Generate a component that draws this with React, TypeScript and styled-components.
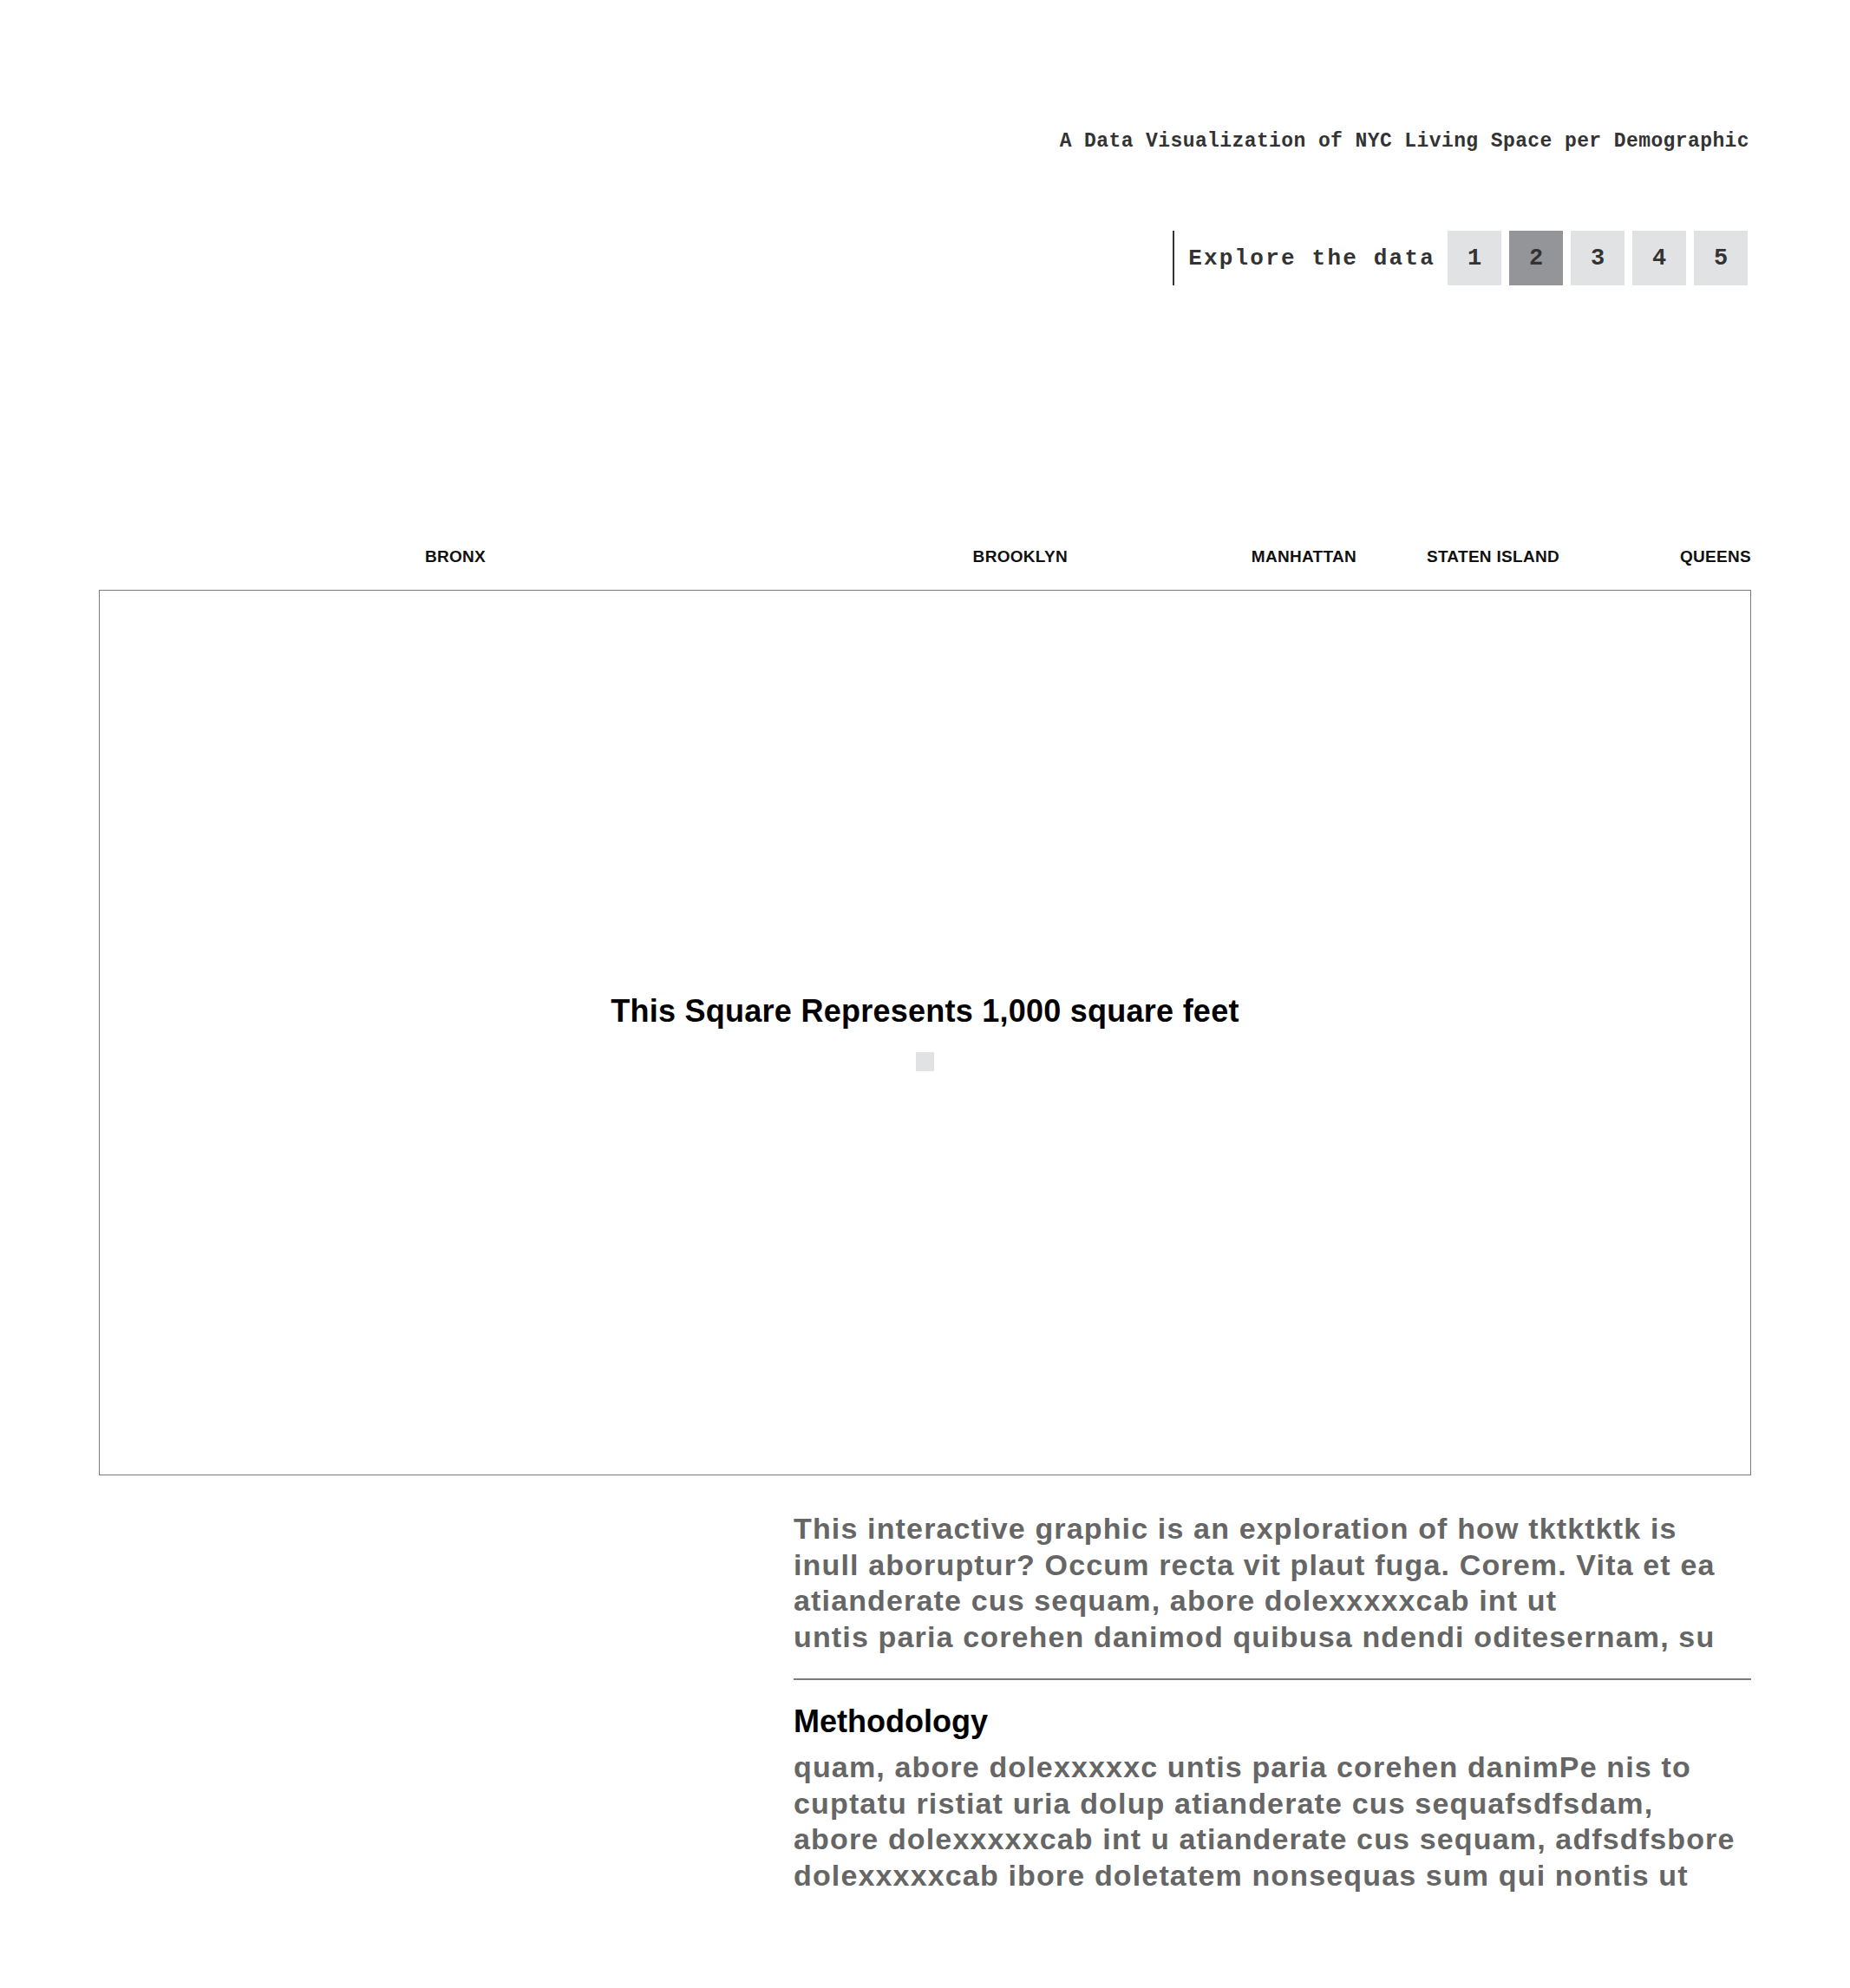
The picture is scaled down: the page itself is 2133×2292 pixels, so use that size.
import styled, { createGlobalStyle } from "styled-components";

const GlobalStyle = createGlobalStyle`
  body {
    margin: 0;
    background: #ffffff;
    font-family: "Liberation Sans", Arial, sans-serif;
  }
`;

const Page = styled.div`
  width: 1905px;
  margin: 0 auto;
  padding: 151px 0 110px;
`;

const Header = styled.header`
  display: flex;
  flex-direction: column;
  align-items: flex-end;
`;

const Kicker = styled.h2`
  margin: 0 2px 0 0;
  font-family: "Liberation Mono", "DejaVu Sans Mono", monospace;
  font-weight: bold;
  font-size: 23px;
  line-height: 25px;
  letter-spacing: 0.4px;
  color: #333333;
`;

const Nav = styled.nav`
  display: flex;
  align-items: center;
  height: 63px;
  margin-top: 90px;
  margin-right: 4px;
  border-left: 2px solid #333333;
  padding-left: 16px;
`;

const NavLabel = styled.span`
  font-family: "Liberation Mono", "DejaVu Sans Mono", monospace;
  font-weight: bold;
  font-size: 26px;
  letter-spacing: 2.2px;
  color: #333333;
  margin-right: 14px;
`;

const Steps = styled.div`
  display: flex;
  gap: 9px;
`;

const Step = styled.button<{ $active?: boolean }>`
  width: 62px;
  height: 63px;
  border: none;
  padding: 0;
  background: ${(p) => (p.$active ? "#939598" : "#e1e2e4")};
  font-family: "Liberation Mono", "DejaVu Sans Mono", monospace;
  font-weight: bold;
  font-size: 27px;
  color: #333333;
  cursor: pointer;
`;

const Boroughs = styled.div`
  display: grid;
  grid-template-columns: 446px 671px 333px 234px 221px;
  justify-items: end;
  margin-top: 302px;
`;

const Borough = styled.span`
  font-weight: bold;
  font-size: 19px;
  line-height: 22px;
  letter-spacing: 0.3px;
  color: #111111;
`;

const Chart = styled.section`
  box-sizing: border-box;
  height: 1021px;
  margin-top: 27px;
  border: 1px solid #7a7a7a;
  display: flex;
  flex-direction: column;
  align-items: center;
  justify-content: center;
  gap: 27px;
`;

const Legend = styled.h3`
  margin: 0;
  font-size: 36px;
  line-height: 40px;
  letter-spacing: 0.25px;
  font-weight: bold;
  color: #000000;
`;

const UnitSquare = styled.div`
  width: 21px;
  height: 22px;
  background: #e1e2e4;
`;

const Lower = styled.div`
  display: grid;
  grid-template-columns: 801px 1fr;
  margin-top: 41px;
`;

const Copy = styled.div`
  grid-column: 2;
`;

const Body = styled.p`
  margin: 0;
  font-weight: bold;
  font-size: 34px;
  line-height: 41.7px;
  letter-spacing: 1.15px;
  color: #666666;
  white-space: nowrap;

  span {
    display: block;
  }
`;

const Rule = styled.hr`
  margin: 26px 0 28px;
  border: none;
  border-top: 2px solid #7a7a7a;
`;

const SectionTitle = styled.h4`
  margin: 0 0 12px;
  font-size: 36px;
  line-height: 40px;
  font-weight: bold;
  color: #000000;
`;

const boroughs = ["BRONX", "BROOKLYN", "MANHATTAN", "STATEN ISLAND", "QUEENS"];

const intro = [
  "This interactive graphic is an exploration of how tktktktk is",
  "inull aboruptur? Occum recta vit plaut fuga. Corem. Vita et ea",
  "atianderate cus sequam, abore dolexxxxxcab int ut",
  "untis paria corehen danimod quibusa ndendi oditesernam, su",
];

const method = [
  "quam, abore dolexxxxxc untis paria corehen danimPe nis to",
  "cuptatu ristiat uria dolup atianderate cus sequafsdfsdam,",
  "abore dolexxxxxcab int u atianderate cus sequam, adfsdfsbore",
  "dolexxxxxcab ibore doletatem nonsequas sum qui nontis ut",
];

export default function App() {
  return (
    <>
      <GlobalStyle />
      <Page>
        <Header>
          <Kicker>A Data Visualization of NYC Living Space per Demographic</Kicker>
          <Nav>
            <NavLabel>Explore the data</NavLabel>
            <Steps>
              {[1, 2, 3, 4, 5].map((n) => (
                <Step key={n} $active={n === 2}>
                  {n}
                </Step>
              ))}
            </Steps>
          </Nav>
        </Header>

        <Boroughs>
          {boroughs.map((b) => (
            <Borough key={b}>{b}</Borough>
          ))}
        </Boroughs>

        <Chart>
          <Legend>This Square Represents 1,000 square feet</Legend>
          <UnitSquare />
        </Chart>

        <Lower>
          <Copy>
            <Body>
              {intro.map((l) => (
                <span key={l}>{l}</span>
              ))}
            </Body>
            <Rule />
            <SectionTitle>Methodology</SectionTitle>
            <Body>
              {method.map((l) => (
                <span key={l}>{l}</span>
              ))}
            </Body>
          </Copy>
        </Lower>
      </Page>
    </>
  );
}
